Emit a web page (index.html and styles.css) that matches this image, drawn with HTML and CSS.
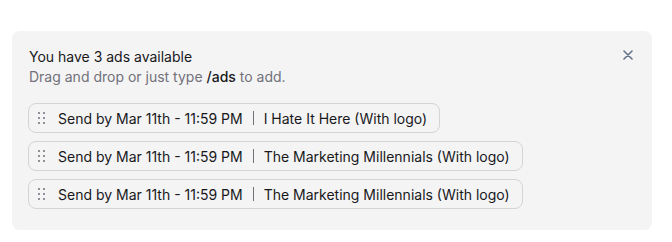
FILE: index.html
```html
<html lang="en">
<head>
    <meta charset="UTF-8">
    <title>Ads</title>
    <link rel="stylesheet" href="styles.css">
</head>
<body>
    <div class="panel">
        <button class="close" aria-label="Close">
            <svg width="10" height="10" viewBox="0 0 10 10">
                <path d="M1 1L9 9M9 1L1 9" stroke="currentColor" stroke-width="1.6" stroke-linecap="round"/>
            </svg>
        </button>
        <div class="title">You have 3 ads available</div>
        <div class="subtitle">Drag and drop or just type <b>/ads</b> to add.</div>
        <div class="ads">
            <div class="ad">
                <span class="grip"><i></i><i></i><i></i><i></i><i></i><i></i></span>
                <span>Send by Mar 11th - 11:59 PM</span>
                <span class="sep"></span>
                <span>I Hate It Here (With logo)</span>
            </div>
            <div class="ad">
                <span class="grip"><i></i><i></i><i></i><i></i><i></i><i></i></span>
                <span>Send by Mar 11th - 11:59 PM</span>
                <span class="sep"></span>
                <span>The Marketing Millennials (With logo)</span>
            </div>
            <div class="ad">
                <span class="grip"><i></i><i></i><i></i><i></i><i></i><i></i></span>
                <span>Send by Mar 11th - 11:59 PM</span>
                <span class="sep"></span>
                <span>The Marketing Millennials (With logo)</span>
            </div>
        </div>
    </div>
</body>
</html>
```

FILE: styles.css
```css
body {
    margin: 0;
    padding: 31px 20px 0 12px;
    font-family: Inter, "Noto Sans", sans-serif;
    background-color: #ffffff;
    color: #18181b;
}

.panel {
    position: relative;
    background-color: #f4f4f5;
    border-radius: 8px;
    padding: 16px 16px 21px 16px;
}

.close {
    position: absolute;
    top: 19px;
    right: 19px;
    border: none;
    background: none;
    padding: 0;
    color: #64748b;
    cursor: pointer;
    display: flex;
}

.title {
    font-size: 14px;
    line-height: 20px;
    margin-left: 1px;
}

.subtitle {
    font-size: 14px;
    line-height: 20px;
    color: #71717a;
    margin-left: 1px;
}

.subtitle b {
    font-weight: 500;
    color: #18181b;
}

.ads {
    display: flex;
    flex-direction: column;
    align-items: flex-start;
    gap: 8px;
    margin-top: 16px;
}

.ad {
    display: flex;
    align-items: center;
    height: 28px;
    padding: 0 12px 0 9px;
    border: 1px solid #d4d4d8;
    border-radius: 8px;
    font-size: 14px;
    background-color: #f4f4f5;
}

.grip {
    display: grid;
    grid-template-columns: repeat(2, 2px);
    gap: 3px 3px;
    margin-right: 13px;
}

.grip i {
    width: 2px;
    height: 2px;
    border-radius: 50%;
    background-color: #71717a;
}

.sep {
    width: 1px;
    height: 14px;
    background-color: #71717a;
    margin: 0 10px;
}
```
